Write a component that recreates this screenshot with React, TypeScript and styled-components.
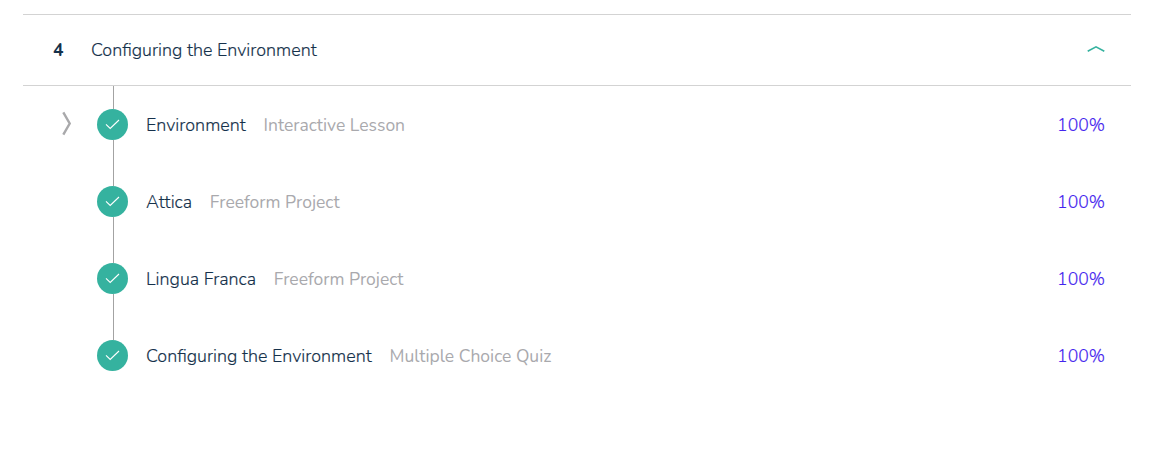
import React from "react";
import styled, { createGlobalStyle } from "styled-components";

const Global = createGlobalStyle`
  body {
    margin: 0;
    background: #fff;
    color: #15314b;
    font-family: Nunito, "Nunito Sans", "Noto Sans", sans-serif;
    font-size: 17.9px;
    font-weight: 300;
    line-height: 24px;
  }
`;

const Module = styled.section`
  box-sizing: border-box;
  padding: 14px 35px 0 23px;
`;

const Header = styled.header`
  display: flex;
  align-items: center;
  height: 70px;
  padding: 0 26px 0 30px;
  border-top: 1px solid #d3d3d3;
  border-bottom: 1px solid #d3d3d3;
`;

const ModuleNumber = styled.span`
  width: 38px;
  font-size: 17.5px;
  font-weight: 700;
`;

const Label = styled.span`
  white-space: nowrap;
  -webkit-text-stroke: 0.15px currentColor;
`;

const Toggle = styled.svg`
  display: block;
  margin: 0 0 2px auto;
`;

const Row = styled.div`
  display: flex;
  align-items: center;
  height: 77px;
  padding-right: 26px;
`;

const Marker = styled.div`
  display: flex;
  width: 74px;
  padding: 0 0 2px 38px;
  box-sizing: border-box;
`;

const Rail = styled.div`
  display: flex;
  flex-direction: column;
  align-items: center;
  width: 31px;
  height: 77px;
  margin-right: 18px;
`;

const Line = styled.div<{ $hidden?: boolean }>`
  flex: 1;
  width: 1px;
  margin-left: 2px;
  background: ${(p) => (p.$hidden ? "transparent" : "#a3a3a3")};
`;

const Badge = styled.div`
  display: flex;
  align-items: center;
  justify-content: center;
  width: 31px;
  height: 31px;
  border-radius: 50%;
  background: #35b29f;
`;

const Kind = styled(Label)`
  margin-left: 17.75px;
  font-size: 17.5px;
  font-weight: 400;
  color: #a9a9ad;
  -webkit-text-stroke: 0;
`;

const Percent = styled(Label)`
  margin-left: auto;
  font-size: 17.6px;
  color: #4424ee;
`;

const lessons = [
  { name: "Environment", kind: "Interactive Lesson", expandable: true },
  { name: "Attica", kind: "Freeform Project" },
  { name: "Lingua Franca", kind: "Freeform Project" },
  { name: "Configuring the Environment", kind: "Multiple Choice Quiz" },
];

export default function App() {
  return (
    <>
      <Global />
      <Module>
        <Header>
          <ModuleNumber>4</ModuleNumber>
          <Label>Configuring the Environment</Label>
          <Toggle width="18" height="10" viewBox="0 0 18 10" fill="none">
            <path d="M0.7 7.3 L9 2.8 L17.3 7.3" stroke="#35b29f" strokeWidth="1.6" />
          </Toggle>
        </Header>
        {lessons.map((lesson, i) => (
          <Row key={lesson.name}>
            <Marker>
              {lesson.expandable && (
                <svg width="12" height="26" viewBox="0 0 12 26" fill="none">
                  <path d="M2.3 1.4 L8.7 12.5 L2.3 23.6" stroke="#a9a9ab" strokeWidth="2.4" />
                </svg>
              )}
            </Marker>
            <Rail>
              <Line />
              <Badge>
                <svg width="15" height="11" viewBox="0 0 15 11" fill="none">
                  <path d="M1 5.4 L5.2 9.5 L14 1" stroke="#fff" strokeWidth="1.1" />
                </svg>
              </Badge>
              <Line $hidden={i === lessons.length - 1} />
            </Rail>
            <Label>{lesson.name}</Label>
            <Kind>{lesson.kind}</Kind>
            <Percent>100%</Percent>
          </Row>
        ))}
      </Module>
    </>
  );
}
